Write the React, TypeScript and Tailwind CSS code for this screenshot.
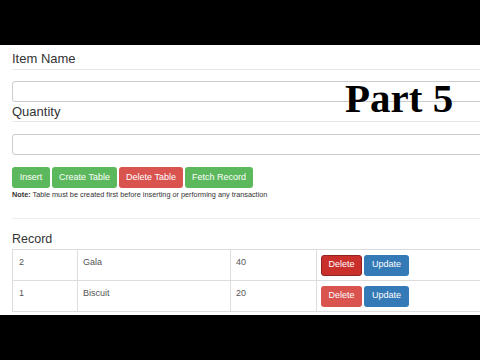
import React from 'react';

const rows = [
  { id: '2', name: 'Gala', qty: '40', pressed: true },
  { id: '1', name: 'Biscuit', qty: '20', pressed: false },
];

const App = () => {
  return (
    <div className="w-[480px] h-[360px] overflow-hidden bg-black flex flex-col font-['Liberation_Sans',Arial,sans-serif]">
      <div className="h-[45px] shrink-0" />

      <div className="relative h-[270px] shrink-0 bg-white overflow-hidden">
        <div className="w-[560px] pl-[12px] pt-[4px] text-[#333]">
          <div className="h-[20px] text-[13px] leading-[20px] border-b border-[#e8e8e8] box-content">
            Item Name
          </div>
          <div className="mt-[11px] h-[21px] border border-[#ccc] rounded-[3px]" />

          <div className="h-[19px] text-[13px] leading-[20px] border-b border-[#e8e8e8] box-content">
            Quantity
          </div>
          <div className="mt-[12px] h-[21px] border border-[#ccc] rounded-[3px]" />

          <div className="mt-[12px] flex gap-[2px]">
            <button className="h-[21px] w-[38px] rounded-[3px] bg-[#5cb85c] text-white text-[9px]">Insert</button>
            <button className="h-[21px] w-[65px] rounded-[3px] bg-[#5cb85c] text-white text-[9px]">Create Table</button>
            <button className="h-[21px] w-[64px] rounded-[3px] bg-[#d9534f] text-white text-[9px]">Delete Table</button>
            <button className="h-[21px] w-[68px] rounded-[3px] bg-[#5cb85c] text-white text-[9px]">Fetch Record</button>
          </div>

          <div className="mt-[1px] h-[11px] text-[7.3px] leading-[11px] text-[#333]">
            <span className="font-bold">Note:</span> Table must be created first before inserting or performing any transaction
          </div>

          <div className="mt-[18px] border-t border-[#eee]" />

          <div className="mt-[12px] h-[18px] text-[12.5px] leading-[16px]">Record</div>

          <table className="w-[560px] border-collapse text-[9px] text-[#555]">
            <tbody>
              {rows.map((r) => (
                <tr key={r.id} className="h-[31px]">
                  <td className="w-[65px] border border-[#ddd] px-[6px] pt-[6px] align-top">{r.id}</td>
                  <td className="w-[153px] border border-[#ddd] px-[5px] pt-[6px] align-top">{r.name}</td>
                  <td className="w-[86px] border border-[#ddd] px-[5px] pt-[6px] align-top">{r.qty}</td>
                  <td className="border border-[#ddd] px-[4px] align-middle">
                    <div className="flex gap-[2px]">
                      <button
                        className={
                          r.pressed
                            ? 'h-[21px] w-[41px] rounded-[3px] bg-[#c9302c] border border-[#8f2421] text-white text-[9px]'
                            : 'h-[21px] w-[41px] rounded-[3px] bg-[#d9534f] text-white text-[9px]'
                        }
                      >
                        Delete
                      </button>
                      <button className="h-[21px] w-[45px] rounded-[3px] bg-[#337ab7] text-white text-[9px]">Update</button>
                    </div>
                  </td>
                </tr>
              ))}
            </tbody>
          </table>
        </div>

        <div className="absolute left-[345px] top-[27px] text-[41px] leading-[52px] font-bold text-black font-['Liberation_Serif','DejaVu_Serif',serif]">
          Part 5
        </div>
      </div>

      <div className="flex-1" />
    </div>
  );
};

export default App;
